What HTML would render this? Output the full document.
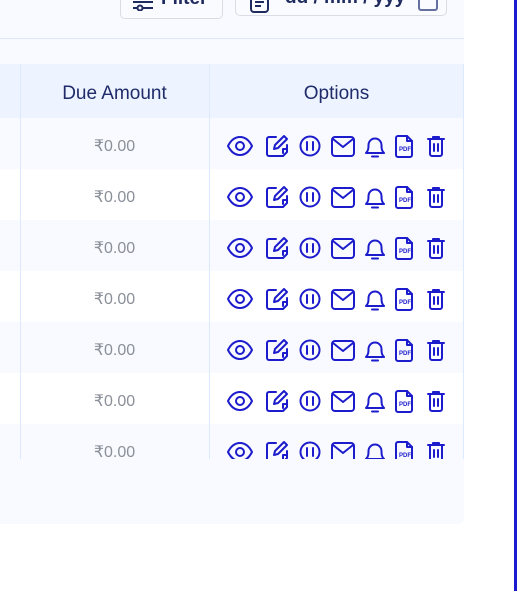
<!DOCTYPE html>
<html><head><meta charset="utf-8"><style>
*{margin:0;padding:0;box-sizing:border-box}
body{width:517px;height:591px;background:#fff;position:relative;overflow:hidden;font-family:"Liberation Sans",sans-serif}
.card{position:absolute;left:0;top:-20px;width:464px;height:544px;background:#f8faff;border-bottom-right-radius:6px}
.bar{position:absolute;left:514px;top:0;width:3px;height:591px;background:#1a1ad0}
.btn{position:absolute;border:1px solid #d9dce3;border-radius:5px;background:#fafbfe;color:#1f2b5e;font-weight:bold;font-size:19px}
.hl{position:absolute;left:0;top:38px;width:464px;height:1px;background:#dde9fb}
.head{position:absolute;left:0;top:64px;width:464px;height:54px;background:#edf4ff;color:#1f2b6a;font-size:19px}
.vl{position:absolute;top:64px;width:1px;height:395px;background:#dbeafe}
.row{position:absolute;left:0;width:464px;height:51px}
.amt{position:absolute;left:20px;top:3px;width:189px;text-align:center;color:#8a8f98;font-size:16px;line-height:51px}
.ic{position:absolute;left:222px;top:10px}
</style></head><body>
<div class="card"></div>
<div class="bar"></div>
<div class="btn" style="left:120px;top:-20px;width:103px;height:39px">
<svg style="position:absolute;left:11px;top:18px" width="22" height="12" viewBox="0 0 22 12"><path d="M1 3h20M1 9h4M11 9h10" stroke="#1f2b5e" stroke-width="2" fill="none"/><circle cx="8" cy="9" r="2.5" stroke="#1f2b5e" stroke-width="2" fill="none"/></svg>
<span style="position:absolute;left:40px;top:8px;line-height:20px">Filter</span></div>
<div class="btn" style="left:235px;top:-20px;width:212px;height:36px">
<svg style="position:absolute;left:13px;top:17px" width="22" height="20" viewBox="0 0 22 20"><rect x="2" y="0" width="17" height="14" rx="3" stroke="#1f2b5e" stroke-width="2" fill="none"/><path d="M6 4h9M6 8h6" stroke="#1f2b5e" stroke-width="2"/></svg>
<span style="position:absolute;left:49px;top:7px;line-height:20px">dd / mm / yyy</span>
<div style="position:absolute;left:182px;top:14px;width:20px;height:16px;border:2px solid #6470a0;border-radius:3px"></div></div>
<div class="hl"></div>
<div class="head"><span style="position:absolute;left:20px;top:3px;width:189px;text-align:center;line-height:54px">Due Amount</span><span style="position:absolute;left:209px;top:3px;width:255px;text-align:center;line-height:54px">Options</span></div>
<div style="position:absolute;left:0;top:118px;width:464px;height:341px;overflow:hidden">
<div id="rows"></div>
</div>
<div class="vl" style="left:20px"></div><div class="vl" style="left:209px"></div><div class="vl" style="left:463px"></div>
<script>
var icons='<svg class="ic" width="230" height="32" viewBox="222 -10 230 32" fill="none" stroke="#1c1ccc" stroke-width="2" stroke-linecap="round" stroke-linejoin="round">'+
'<path d="M228 18c3-6 7-9 12-9s9 3 12 9c-3 6-7 9-12 9s-9-3-12-9z" transform="translate(0,-10)"/><circle cx="240" cy="8" r="4"/>'+
'<path d="M276 -1h-7a2 2 0 0 0-2 2v15a2 2 0 0 0 2 2h14l4-4v-7"/><path d="M283 11v4M287 11h-4"/><path d="M284 -2l3 3-9 9-4 1 1-4z"/>'+
'<circle cx="310" cy="8" r="9.5"/><path d="M307 4v8M313 4v8"/>'+
'<rect x="332" y="-1" width="22" height="19" rx="3"/><path d="M333 1l10 8 10-8"/>'+
'<path d="M366 15c2.5-2.5 2.5-5 2.5-8a6.5 6.5 0 0 1 13 0c0 3 0 5.5 2.5 8z"/><path d="M372 18.5h6"/>'+
'<path d="M398 -2h9l5 5v14a2 2 0 0 1-2 2h-12a2 2 0 0 1-2-2v-17a2 2 0 0 1 2-2z"/><path d="M407 -2v5h5"/>'+
'<text x="405" y="13" font-family="Liberation Sans" font-size="6" font-weight="bold" fill="#1c1ccc" stroke="none" text-anchor="middle">PDF</text>'+
'<path d="M428 1h16M433 1v-2h6v2M430 1v15a2 2 0 0 0 2 2h8a2 2 0 0 0 2-2v-15M434 6v7M438 6v7"/></svg>';
var h='';for(var i=0;i<7;i++){h+='<div class="row" style="top:'+(i*51)+'px;background:'+(i%2?'#fff':'#f8faff')+'"><div class="amt">₹0.00</div>'+icons+'</div>';}
document.getElementById('rows').innerHTML=h;
</script>
</body></html>
